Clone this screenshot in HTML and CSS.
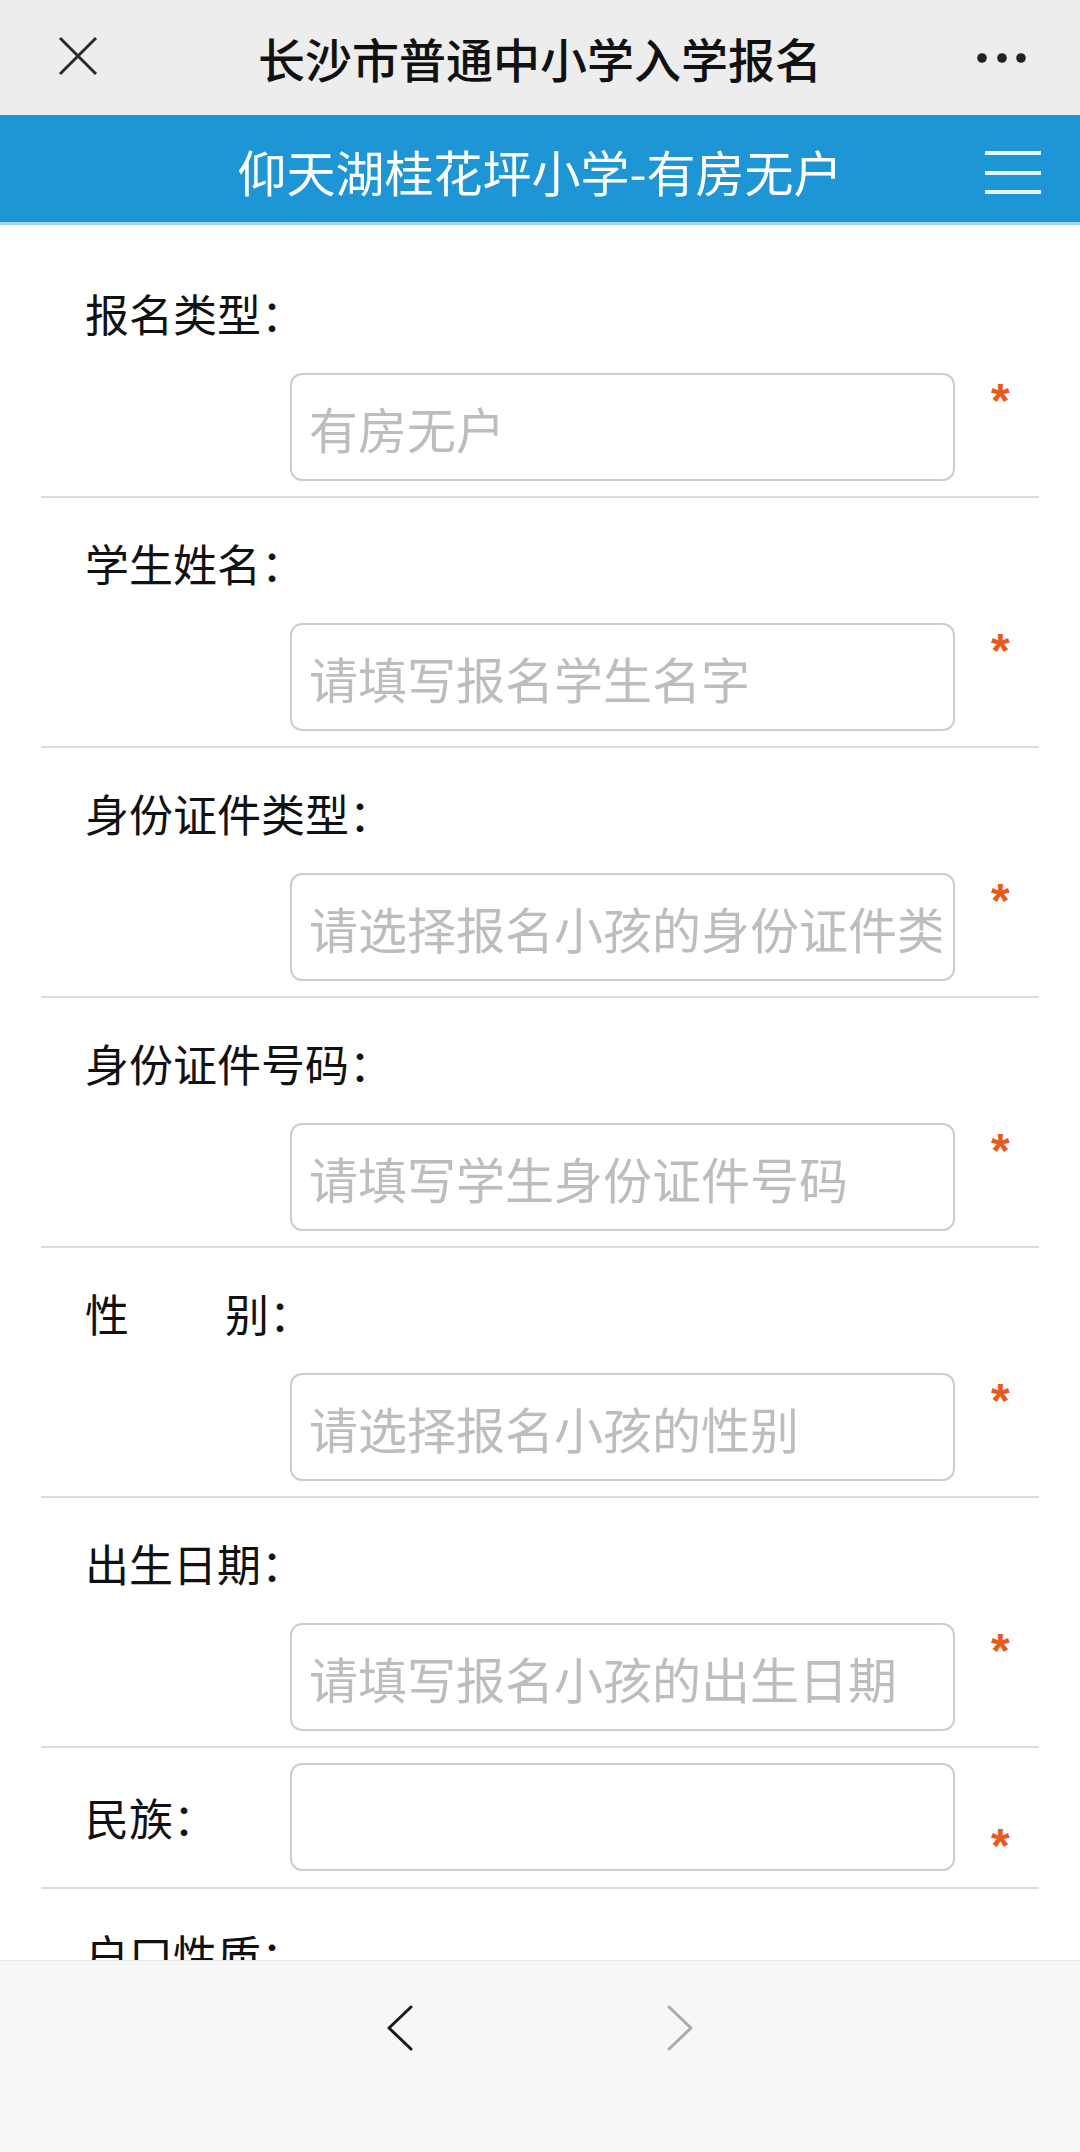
FILE: index.html
```html
<!DOCTYPE html>
<html lang="zh-CN">
<head>
<meta charset="utf-8">
<title>长沙市普通中小学入学报名</title>
<link rel="stylesheet" href="styles.css">
</head>
<body>
<div class="page">
  <header class="topbar">
    <div class="tb-left">
      <svg class="icon" width="40" height="40" viewBox="0 0 40 40"><path d="M2 2 L38 38 M38 2 L2 38" stroke="#2b2b2b" stroke-width="3" fill="none"/></svg>
    </div>
    <h1 class="tb-title">长沙市普通中小学入学报名</h1>
    <div class="tb-right">
      <svg class="icon" width="50" height="12" viewBox="0 0 50 12"><circle cx="5" cy="6" r="4.8" fill="#222"/><circle cx="25" cy="6" r="4.8" fill="#222"/><circle cx="44" cy="6" r="4.8" fill="#222"/></svg>
    </div>
  </header>

  <div class="appbar">
    <div></div>
    <h2 class="ab-title">仰天湖桂花坪小学-有房无户</h2>
    <div class="ab-right">
      <svg class="icon" width="56" height="44" viewBox="0 0 56 44"><rect x="0" y="0" width="56" height="4" fill="#e6f8ff"/><rect x="0" y="20" width="56" height="4" fill="#e6f8ff"/><rect x="0" y="39" width="56" height="4" fill="#e6f8ff"/></svg>
    </div>
  </div>

  <main class="form">
    <div class="row">
      <span class="label">报名类型：</span>
      <input class="input" readonly placeholder="有房无户">
      <span class="req">*</span>
    </div>
    <div class="row">
      <span class="label">学生姓名：</span>
      <input class="input" readonly placeholder="请填写报名学生名字">
      <span class="req">*</span>
    </div>
    <div class="row">
      <span class="label">身份证件类型：</span>
      <input class="input" readonly placeholder="请选择报名小孩的身份证件类型">
      <span class="req">*</span>
    </div>
    <div class="row">
      <span class="label">身份证件号码：</span>
      <input class="input" readonly placeholder="请填写学生身份证件号码">
      <span class="req">*</span>
    </div>
    <div class="row">
      <span class="label">性<span class="spread">别：</span></span>
      <input class="input" readonly placeholder="请选择报名小孩的性别">
      <span class="req">*</span>
    </div>
    <div class="row">
      <span class="label">出生日期：</span>
      <input class="input" readonly placeholder="请填写报名小孩的出生日期">
      <span class="req">*</span>
    </div>
    <div class="row row-inline">
      <span class="label">民族：</span>
      <input class="input" readonly>
      <span class="req">*</span>
    </div>
    <div class="row">
      <span class="label">户口性质：</span>
    </div>
  </main>

  <footer class="toolbar">
    <svg class="icon" width="28" height="46" viewBox="0 0 28 46"><polyline points="25,2 3,23 25,44" stroke="#1a1a1a" stroke-width="3" fill="none" stroke-linecap="round" stroke-linejoin="round"/></svg>
    <svg class="icon" width="28" height="46" viewBox="0 0 28 46"><polyline points="3,2 25,23 3,44" stroke="#ababab" stroke-width="3" fill="none" stroke-linecap="round" stroke-linejoin="round"/></svg>
  </footer>
</div>
</body>
</html>
```

FILE: styles.css
```css
* {
  box-sizing: border-box;
  margin: 0;
  padding: 0;
}

html, body {
  width: 1080px;
  height: 2152px;
  overflow: hidden;
  background: #ffffff;
  font-family: "Noto Sans CJK SC", "Noto Sans", sans-serif;
}

.page {
  display: flex;
  flex-direction: column;
  height: 2152px;
}

.icon {
  display: block;
}

/* top WeChat-like bar */
.topbar {
  flex: none;
  height: 115px;
  background: #ededed;
  display: grid;
  grid-template-columns: 1fr auto 1fr;
  align-items: center;
}

.tb-left {
  display: flex;
  padding-left: 58px;
  margin-top: -4px;
}

.tb-title {
  font-size: 47px;
  font-weight: 500;
  line-height: 1;
  color: #111111;
}

.tb-right {
  justify-self: end;
  display: flex;
  padding-right: 53px;
}

/* blue app bar */
.appbar {
  flex: none;
  height: 110px;
  background: #1e96d6;
  border-bottom: 3px solid #a3d6f0;
  display: grid;
  grid-template-columns: 1fr auto 1fr;
  align-items: center;
}

.ab-title {
  font-size: 49px;
  font-weight: 400;
  line-height: 1;
  color: #ffffff;
  margin-top: 4px;
}

.ab-right {
  justify-self: end;
  display: flex;
  padding-right: 39px;
  margin-top: 8px;
}

/* form */
.form {
  flex: 1;
  overflow: hidden;
  padding: 23px 41px 0;
}

.row {
  display: grid;
  grid-template-columns: 249px 665px 1fr;
  padding: 35px 0 15px;
  border-bottom: 2px solid #dcdcdc;
}

.label {
  grid-column: 1 / -1;
  height: 60px;
  line-height: 60px;
  padding-left: 44px;
  margin-bottom: 30px;
  font-size: 44px;
  color: #111111;
  white-space: nowrap;
}

.spread {
  margin-left: 96px;
}

.input {
  grid-column: 2;
  width: 100%;
  height: 108px;
  border: 2px solid #cdcdcd;
  border-radius: 12px;
  padding: 0 12px 0 17px;
  background: #ffffff;
  font-family: "Noto Sans CJK SC", "Noto Sans", sans-serif;
  font-size: 49px;
  color: #333333;
  outline: none;
}

.input::placeholder {
  color: #bdbdbd;
}

.req {
  grid-column: 3;
  align-self: start;
  padding-left: 36px;
  margin-top: 4px;
  font-family: "Liberation Sans", sans-serif;
  font-size: 48px;
  font-weight: 700;
  line-height: 48px;
  color: #e8591c;
}

.row-inline {
  padding: 15px 0 16px;
}

.row-inline .label {
  grid-column: 1;
  align-self: center;
  margin-bottom: 0;
}

.row-inline .req {
  margin-top: 59px;
}

/* bottom toolbar */
.toolbar {
  flex: none;
  height: 192px;
  background: #f7f7f7;
  border-top: 1px solid #e8e8e8;
  display: flex;
  justify-content: center;
  align-items: flex-start;
  gap: 252px;
  padding-top: 44px;
}
```
